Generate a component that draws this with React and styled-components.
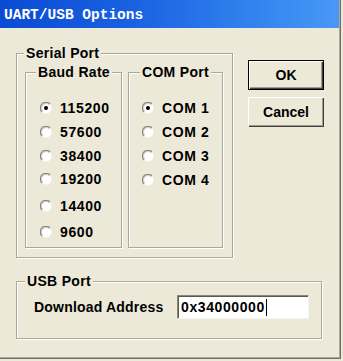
import React from 'react'
import styled, { createGlobalStyle } from 'styled-components'

const GlobalStyle = createGlobalStyle`
  body {
    margin: 0;
    background: #ece9d8;
    font-family: "Liberation Sans", Arial, sans-serif;
  }
`

const Window = styled.div`
  width: 341px;
  height: 359px;
  background: #ece9d8;
  box-shadow: inset -1px -1px 0 #716f64, inset -2px -2px 0 #aca899;
  display: flex;
  flex-direction: column;
`

const TitleBar = styled.div`
  height: 28px;
  margin-right: 2px;
  padding: 1px 0 0 4px;
  box-sizing: border-box;
  display: flex;
  align-items: center;
  background: linear-gradient(to right, #0a4bd3 0%, #1a62e2 40%, #3a8cf2 85%, #4a98f6 100%);
  color: #fff;
  font-family: "Liberation Mono", "Courier New", monospace;
  font-weight: bold;
  font-size: 14.5px;
`

const Body = styled.div`
  display: grid;
  grid-template-columns: 217px 76px;
  column-gap: 15px;
  row-gap: 15px;
  padding: 17px 0 0 16px;
`

const GroupBox = styled.fieldset`
  margin: 0;
  min-width: 0;
  box-sizing: border-box;
  padding: ${p => p.$pad};
  width: ${p => p.$width}px;
  border: 1px solid #aca899;
  box-shadow: inset 1px 1px 0 #fff, 1px 1px 0 #fff;
  grid-column: ${p => p.$span ? '1 / -1' : 'auto'};
`

const Legend = styled.legend`
  padding: 0 2px;
  margin-left: ${p => p.$indent}px;
  line-height: 16px;
  font-size: 14px;
  font-weight: bold;
  letter-spacing: 0.3px;
  color: #000;
  background: #ece9d8;
`

const Columns = styled.div`
  display: flex;
  gap: 6px;
  align-items: stretch;
`

const RadioRow = styled.label`
  display: flex;
  align-items: center;
  gap: 8px;
  height: 24px;
  margin-top: ${p => p.$shift || 0}px;
  font-size: 14px;
  font-weight: bold;
  letter-spacing: 0.6px;
  color: #000;
`

const Buttons = styled.div`
  display: flex;
  flex-direction: column;
  gap: 7px;
  margin-top: 15px;
`

const Button = styled.button`
  width: 76px;
  height: 30px;
  padding: 0;
  box-sizing: border-box;
  background: #ece9d8;
  border: ${p => p.$default ? '1px solid #000' : 'none'};
  box-shadow: inset 1px 1px 0 #fff, inset -1px -1px 0 #404040, inset -2px -2px 0 #9d9a8c;
  font-family: "Liberation Sans", Arial, sans-serif;
  font-size: 14px;
  font-weight: bold;
  color: #000;
`

const FieldRow = styled.div`
  display: flex;
  align-items: center;
`

const FieldLabel = styled.span`
  width: 143px;
  font-size: 14px;
  font-weight: bold;
  letter-spacing: 0.2px;
  color: #000;
`

const TextBox = styled.div`
  width: 132px;
  height: 24px;
  box-sizing: border-box;
  padding-left: 3px;
  display: flex;
  align-items: center;
  background: #fff;
  border-style: solid;
  border-width: 1px;
  border-color: #8a8878 #f4f3ee #f4f3ee #8a8878;
  box-shadow: inset 1px 1px 0 #5a594f;
  font-size: 14px;
  font-weight: bold;
  letter-spacing: 0.6px;
  color: #000;
`

const Caret = styled.span`
  width: 1px;
  height: 17px;
  margin-left: 1px;
  background: #000;
`

function Radio({ checked }) {
  return (
    <svg width='12' height='12' viewBox='0 0 12 12'>
      <circle cx='6' cy='6' r='5.5' fill='#fff' />
      <path d='M2 10 A5 5 0 0 1 10 2' fill='none' stroke='#8c8a80' strokeWidth='1.3' />
      <path d='M2.8 9.2 A4 4 0 0 1 9.2 2.8' fill='none' stroke='#c8c6bc' strokeWidth='1' />
      { checked && <circle cx='6' cy='6' r='2' fill='#000' /> }
    </svg>
  )
}

const baudRates = [
  { value: '115200', checked: true },
  { value: '57600' },
  { value: '38400' },
  { value: '19200', shift: -1 },
  { value: '14400', shift: 3 },
  { value: '9600', shift: 2 },
]

const comPorts = [
  { value: 'COM 1', checked: true },
  { value: 'COM 2' },
  { value: 'COM 3' },
  { value: 'COM 4' },
]

export default function App() {
  return (
    <>
      <GlobalStyle />
      <Window>
        <TitleBar>UART/USB Options</TitleBar>

        <Body>
          <GroupBox $pad='3px 9px 9px 8px' $width={217}>
            <Legend $indent={-1}>Serial Port</Legend>
            <Columns>
              <GroupBox $pad='16px 0 3px 14px' $width={97}>
                <Legend $indent={-4}>Baud Rate</Legend>
                {
                  baudRates.map(rate =>
                    <RadioRow key={rate.value} $shift={rate.shift}>
                      <Radio checked={rate.checked} />
                      { rate.value }
                    </RadioRow>
                  )
                }
              </GroupBox>
              <GroupBox $pad='16px 0 3px 13px' $width={95}>
                <Legend $indent={-2}>COM Port</Legend>
                {
                  comPorts.map(port =>
                    <RadioRow key={port.value}>
                      <Radio checked={port.checked} />
                      { port.value }
                    </RadioRow>
                  )
                }
              </GroupBox>
            </Columns>
          </GroupBox>

          <Buttons>
            <Button $default>OK</Button>
            <Button>Cancel</Button>
          </Buttons>

          <GroupBox $pad='6px 0 19px 17px' $width={306} $span>
            <Legend $indent={-9}>USB Port</Legend>
            <FieldRow>
              <FieldLabel>Download Address</FieldLabel>
              <TextBox>
                0x34000000
                <Caret />
              </TextBox>
            </FieldRow>
          </GroupBox>
        </Body>
      </Window>
    </>
  )
}
